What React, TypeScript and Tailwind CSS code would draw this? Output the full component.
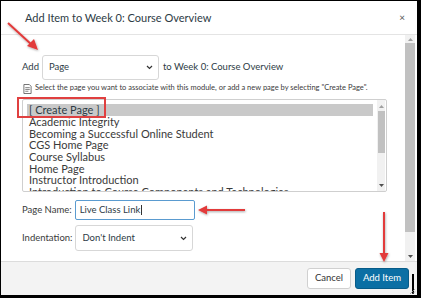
import React from "react";

const items = [
  "Academic Integrity",
  "Becoming a Successful Online Student",
  "CGS Home Page",
  "Course Syllabus",
  "Home Page",
  "Instructor Introduction",
  "Introduction to Course Components and Technologies",
];

function Chevron() {
  return (
    <svg width="7" height="5" viewBox="0 0 7 5" className="shrink-0">
      <path d="M1 1 L3.5 3.5 L6 1" fill="none" stroke="#333" strokeWidth="1.2" />
    </svg>
  );
}

export default function App() {
  return (
    <div
      className="relative w-[421px] h-[298px] bg-black pt-[1px] pl-[1px] pr-[4px] pb-[3px] overflow-hidden"
      style={{ fontFamily: "Lato, 'Open Sans', sans-serif" }}
    >
      <div className="flex flex-col h-full bg-white text-[#2d3b45]">
        {/* header */}
        <div className="h-[34px] shrink-0 flex items-center justify-between pl-[24px] pr-[12px] border-b border-[#e4e4e4]">
          <div className="text-[11px] leading-none">Add Item to Week 0: Course Overview</div>
          <div className="text-[10px] leading-none text-[#555] pb-[1px]">×</div>
        </div>
        {/* body */}
        <div className="flex-1 flex min-h-0">
          <div className="flex-1 pl-[21px] pr-[17px] pt-[20px] min-w-0">
            <div className="flex items-center h-[25px]">
              <span className="text-[9.5px] mr-[3px]">Add</span>
              <div className="w-[117px] h-[25px] border border-[#d7d7d7] rounded-[3px] flex items-center justify-between pl-[6px] pr-[5px]">
                <span className="text-[9.5px]">Page</span>
                <Chevron />
              </div>
              <span className="text-[9.5px] ml-[4px]">to Week 0: Course Overview</span>
            </div>
            <div className="flex items-center mt-[2px] h-[12px]">
              <svg width="9" height="10" viewBox="0 0 10 11" className="ml-[1px] mr-[3px] mt-[2px]">
                <path d="M1 0.5 H7 L9 2.5 V10.5 H1 Z" fill="#fff" stroke="#555" strokeWidth="0.9" />
                <path d="M2.5 4 H7.5 M2.5 6 H7.5 M2.5 8 H6" stroke="#555" strokeWidth="0.8" />
              </svg>
              <span className="text-[7.5px] leading-none whitespace-nowrap text-[#3b3b3b]">
                Select the page you want to associate with this module, or add a new page by selecting "Create Page".
              </span>
            </div>
            <div className="mt-[5px] w-[365px] h-[93px] border border-[#cfcfcf] rounded-[2px] flex overflow-hidden">
              <div className="flex-1 pt-[4px] pl-[4px] pr-[4px] overflow-hidden">
                <div className="h-[12px] bg-[#c9c9c9] text-[11px] leading-[12px] pl-[2px] whitespace-nowrap">[ Create Page ]</div>
                {items.map((t) => (
                  <div key={t} className="h-[11.7px] text-[11px] leading-[12px] pl-[2px] whitespace-nowrap text-[#3a3a3a]">
                    {t}
                  </div>
                ))}
              </div>
              <div className="w-[8px] mr-[1px] bg-[#f1f1f1] flex flex-col items-center">
                <div className="h-[6px] mt-[3px] flex items-center">
                  <svg width="5" height="3" viewBox="0 0 5 3"><path d="M0 3 L2.5 0 L5 3 Z" fill="#a0a0a0" /></svg>
                </div>
                <div className="w-[7px] h-[42px] bg-[#c1c1c1] mt-[2px]" />
                <div className="flex-1" />
                <div className="h-[6px] mb-[3px] flex items-center">
                  <svg width="5" height="3" viewBox="0 0 5 3"><path d="M0 0 L2.5 3 L5 0 Z" fill="#505050" /></svg>
                </div>
              </div>
            </div>
            <div className="flex items-center mt-[8px] h-[20px]">
              <span className="text-[9.5px] mr-[3px] text-[#3b3b3b]">Page Name:</span>
              <div className="w-[120px] h-[20px] border border-[#5a9bd0] rounded-[2px] flex items-center pl-[4px] text-[9.5px]">
                Live Class Link<span className="inline-block w-[1px] h-[10px] bg-[#333] ml-[0.5px]" />
              </div>
            </div>
            <div className="flex items-center mt-[5px] h-[26px]">
              <span className="text-[9.5px] mr-[3px] text-[#3b3b3b]">Indentation:</span>
              <div className="w-[118px] h-[26px] border border-[#d7d7d7] rounded-[3px] flex items-center justify-between pl-[6px] pr-[5px]">
                <span className="text-[9.5px]">Don't Indent</span>
                <Chevron />
              </div>
            </div>
          </div>
          {/* outer scrollbar */}
          <div className="w-[10px] bg-[#f1f1f1] flex flex-col items-center">
            <div className="h-[8px] flex items-center">
              <svg width="5" height="3" viewBox="0 0 5 3"><path d="M0 3 L2.5 0 L5 3 Z" fill="#a0a0a0" /></svg>
            </div>
            <div className="w-[10px] h-[189px] bg-[#c1c1c1]" />
            <div className="flex-1" />
            <div className="h-[9px] flex items-center">
              <svg width="5" height="3" viewBox="0 0 5 3"><path d="M0 0 L2.5 3 L5 0 Z" fill="#505050" /></svg>
            </div>
          </div>
          <div className="w-[2px]" />
        </div>
        {/* footer */}
        <div className="h-[34px] shrink-0 bg-[#f3f3f3] border-t border-[#dcdcdc] flex items-center justify-end pr-[8px] gap-[4px]">
          <div className="w-[44px] h-[21px] bg-white border border-[#d0d0d0] rounded-[3px] flex items-center justify-center text-[9.5px] text-[#333]">
            Cancel
          </div>
          <div className="w-[54px] h-[21px] bg-[#0b6fa4] border border-[#075b88] rounded-[3px] flex items-center justify-center text-[9.5px] text-white">
            Add Item
          </div>
        </div>
      </div>
      {/* black artifact right of Add Item */}
      <div className="absolute left-[412px] top-[274px] w-[2px] h-[20px] bg-black" />
      {/* resize grip */}
      <svg className="absolute left-[409px] top-[288px]" width="7" height="7" viewBox="0 0 7 7">
        <path d="M6 1 L1 6 M6 3.5 L3.5 6" stroke="#999" strokeWidth="0.8" />
      </svg>
      {/* red highlight box */}
      <div className="absolute left-[17px] top-[97px] w-[89px] h-[21px] border-2 border-[#e04040]" />
      {/* red arrows */}
      <svg className="absolute left-0 top-0 pointer-events-none" width="421" height="298" viewBox="0 0 421 298">
        <defs>
          <filter id="sh" x="-20%" y="-20%" width="140%" height="140%">
            <feDropShadow dx="0.5" dy="1" stdDeviation="0.8" floodColor="#000" floodOpacity="0.35" />
          </filter>
        </defs>
        <g fill="#e23a3a" stroke="#e23a3a" filter="url(#sh)">
          <line x1="8" y1="23" x2="32" y2="45" strokeWidth="2" />
          <path d="M38 50 L27 46 L34 39 Z" stroke="none" />
          <line x1="245" y1="210" x2="206" y2="210" strokeWidth="2" />
          <path d="M198 210 L207 205.5 L207 214.5 Z" stroke="none" />
          <line x1="384" y1="212" x2="384" y2="254" strokeWidth="2" />
          <path d="M384 262 L379.5 253 L388.5 253 Z" stroke="none" />
        </g>
      </svg>
    </div>
  );
}
